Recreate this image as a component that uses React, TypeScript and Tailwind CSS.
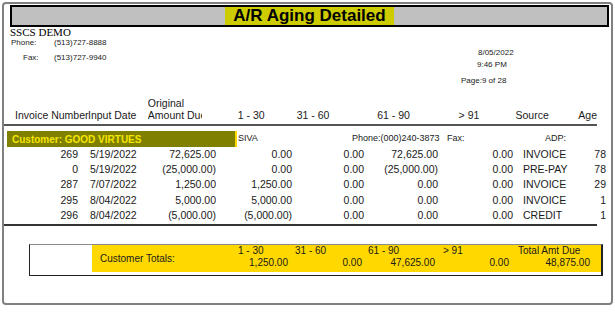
import React from "react";

const rows = [
  ["269", "5/19/2022", "72,625.00", "0.00", "0.00", "72,625.00", "0.00", "INVOICE", "78"],
  ["0", "5/19/2022", "(25,000.00)", "0.00", "0.00", "(25,000.00)", "0.00", "PRE-PAY", "78"],
  ["287", "7/07/2022", "1,250.00", "1,250.00", "0.00", "0.00", "0.00", "INVOICE", "29"],
  ["295", "8/04/2022", "5,000.00", "5,000.00", "0.00", "0.00", "0.00", "INVOICE", "1"],
  ["296", "8/04/2022", "(5,000.00)", "(5,000.00)", "0.00", "0.00", "0.00", "CREDIT", "1"],
];

const totals = [
  { h: "1 - 30", v: "1,250.00", w: "w-[54px]", pl: "pl-[2px]" },
  { h: "31 - 60", v: "0.00", w: "w-[74px]", pl: "pl-[5px]" },
  { h: "61 - 90", v: "47,625.00", w: "w-[73px]", pl: "pl-[4px]" },
  { h: "> 91", v: "0.00", w: "w-[74px]", pl: "pl-[6px]" },
  { h: "Total Amt Due", v: "48,875.00", w: "w-[81px]", pl: "pl-[7px]" },
];

export default function App() {
  return (
    <div className="w-[615px] h-[319px] bg-white pt-[2px] pl-[2px] text-[#1a1a1a] font-['Liberation_Sans',Arial,sans-serif]">
      <div className="w-[611px] h-[303px] border-2 border-[#808080] rounded-[4px] flex flex-col">
        {/* Title bar */}
        <div className="ml-[6px] mt-[1px] w-[599px] h-[22px] border-2 border-black bg-[#c0c0c0] flex justify-center">
          <div className="h-full px-[8px] bg-[#cccc00] text-[17px] font-bold leading-[18px] text-black whitespace-nowrap">
            A/R Aging Detailed
          </div>
        </div>

        {/* Company info */}
        <div className="flex h-[70px]">
          <div className="w-[457px] flex flex-col">
            <div className="ml-[6px] text-[11px] leading-[11px] font-['Liberation_Serif','Times_New_Roman',serif] text-black">
              SSCS DEMO
            </div>
            <div className="flex text-[8px] leading-[10px] ml-[7px]">
              <span className="w-[43px]">Phone:</span>
              <span>(513)727-8888</span>
            </div>
            <div className="flex text-[8px] leading-[10px] ml-[7px] mt-[5px]">
              <span className="w-[43px] pl-[12px]">Fax:</span>
              <span>(513)727-9940</span>
            </div>
          </div>
          <div className="flex flex-col text-[8px] leading-[10px] pt-[21px]">
            <span className="ml-[17px]">8/05/2022</span>
            <span className="ml-[16px] mt-[2px]">9:46 PM</span>
            <span className="mt-[6px]">Page:9 of 28</span>
          </div>
        </div>

        {/* Column headers */}
        <div className="w-[593px] flex items-end text-[10.5px] leading-[12px] pb-[3px] border-b-2 border-[#555] whitespace-nowrap">
          <div className="w-[84px] pl-[11px]">Invoice Number</div>
          <div className="w-[61px]">Input Date</div>
          <div className="w-[55px] overflow-hidden flex flex-col">
            <span>Original</span>
            <span>Amount Due</span>
          </div>
          <div className="w-[96px] pl-[36px]">1 - 30</div>
          <div className="w-[82px]">31 - 60</div>
          <div className="w-[83px]">61 - 90</div>
          <div className="w-[58px]">&gt; 91</div>
          <div className="w-[64px]">Source</div>
          <div>Age</div>
        </div>

        {/* Customer line */}
        <div className="mt-[5px] h-[16px] flex items-center text-[9px] whitespace-nowrap">
          <div className="ml-[3px] w-[230px] h-full bg-[#808000] border-r-2 border-[#ffd800] pl-[5px] flex items-center text-[10px] font-bold text-[#f5e600]">
            Customer: GOOD VIRTUES
          </div>
          <div className="ml-px w-[114px]">SIVA</div>
          <div className="w-[95px]">Phone:(000)240-3873</div>
          <div className="w-[98px]">Fax:</div>
          <div>ADP:</div>
        </div>

        {/* Rows */}
        <div className="flex flex-col text-[10.5px] whitespace-nowrap">
          {rows.map((r, i) => (
            <div key={i} className="flex items-center h-[15.3px]">
              <div className="w-[74px] text-right">{r[0]}</div>
              <div className="w-[62px] pl-[12px]">{r[1]}</div>
              <div className="w-[76px] text-right">{r[2]}</div>
              <div className="w-[76px] text-right">{r[3]}</div>
              <div className="w-[72px] text-right">{r[4]}</div>
              <div className="w-[74px] text-right">{r[5]}</div>
              <div className="w-[75px] text-right">{r[6]}</div>
              <div className="w-[67px] pl-[10px]">{r[7]}</div>
              <div className="w-[26px] text-right">{r[8]}</div>
            </div>
          ))}
        </div>
        <div className="mt-[1px] w-[593px] border-t-2 border-[#333]" />

        {/* Totals */}
        <div className="mt-[18px] ml-[25px] w-[574px] h-[32px] border border-r-2 border-[#222] border-t-[#8a8a8a] flex flex-col">
          <div className="flex h-[27px]">
            <div className="w-[62px]" />
            <div className="flex-1 bg-[#ffd800] flex text-[10px] leading-[12px] whitespace-nowrap">
              <div className="w-[144px] pl-[8px] flex items-center">Customer Totals:</div>
              {totals.map((t) => (
                <div key={t.h} className={`${t.w} flex flex-col`}>
                  <span className={t.pl}>{t.h}</span>
                  <span className="text-right pr-[2px]">{t.v}</span>
                </div>
              ))}
            </div>
          </div>
        </div>
      </div>
    </div>
  );
}
